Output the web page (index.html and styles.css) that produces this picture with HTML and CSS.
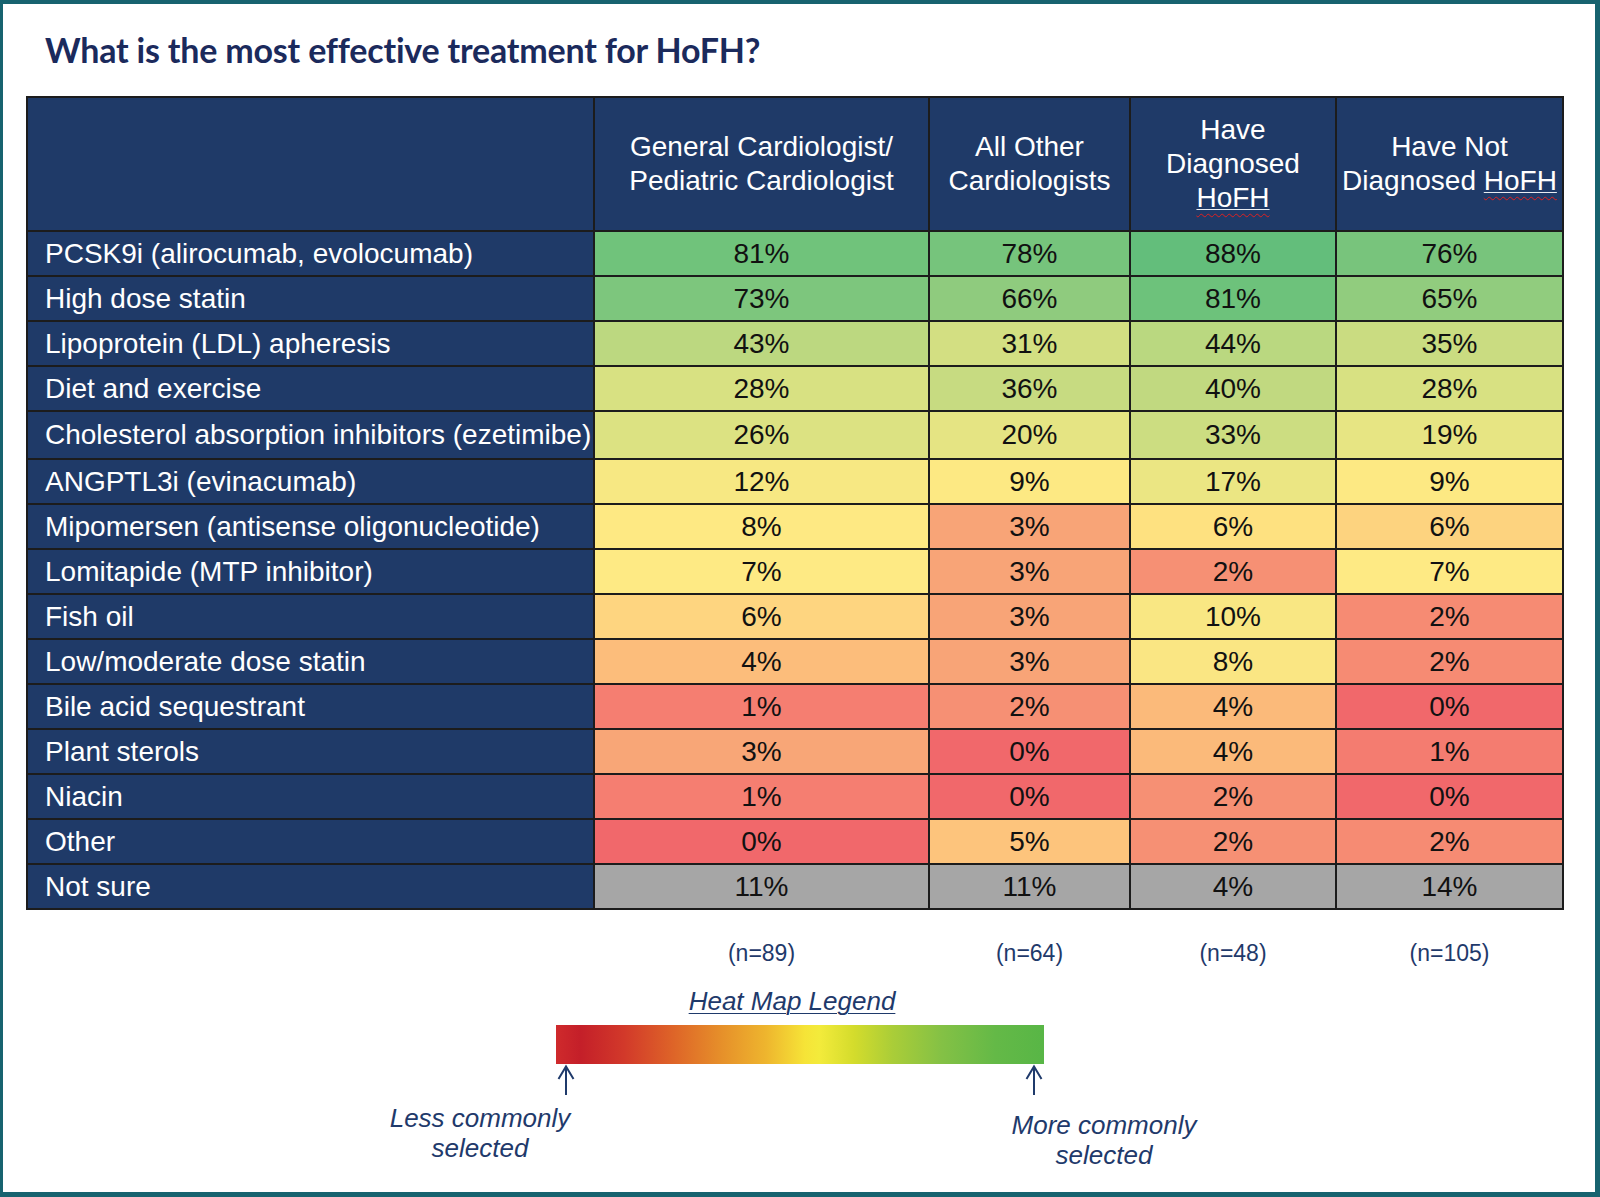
FILE: index.html
```html
<!DOCTYPE html>
<html lang="en">
<head>
<meta charset="utf-8">
<title>What is the most effective treatment for HoFH?</title>
<link rel="stylesheet" href="styles.css">
</head>
<body>
<div class="frame">
  <h1 class="title">What is the most effective treatment for HoFH?</h1>

  <div class="heat">
    <div class="hcell hcorner"></div>
    <div class="hcell"><div>General Cardiologist/<br>Pediatric Cardiologist</div></div>
    <div class="hcell"><div>All Other<br>Cardiologists</div></div>
    <div class="hcell"><div>Have<br>Diagnosed<br><span class="spell"><span class="ul">HoFH</span></span></div></div>
    <div class="hcell"><div>Have Not<br>Diagnosed <span class="spell"><span class="ul">HoFH</span></span></div></div>

    <div class="lbl">PCSK9i (alirocumab, evolocumab)</div>
    <div class="val" style="background:#70c37b">81%</div>
    <div class="val" style="background:#76c47c">78%</div>
    <div class="val" style="background:#63be7b">88%</div>
    <div class="val" style="background:#78c47c">76%</div>

    <div class="lbl">High dose statin</div>
    <div class="val" style="background:#7dc67d">73%</div>
    <div class="val" style="background:#8fcb7e">66%</div>
    <div class="val" style="background:#6dc27b">81%</div>
    <div class="val" style="background:#91cc7e">65%</div>

    <div class="lbl">Lipoprotein (LDL) apheresis</div>
    <div class="val" style="background:#bcd880">43%</div>
    <div class="val" style="background:#d3df82">31%</div>
    <div class="val" style="background:#bad880">44%</div>
    <div class="val" style="background:#cadc81">35%</div>

    <div class="lbl">Diet and exercise</div>
    <div class="val" style="background:#d8e182">28%</div>
    <div class="val" style="background:#c7db81">36%</div>
    <div class="val" style="background:#c1d980">40%</div>
    <div class="val" style="background:#d8e182">28%</div>

    <div class="lbl">Cholesterol absorption inhibitors (ezetimibe)</div>
    <div class="val" style="background:#dce282">26%</div>
    <div class="val" style="background:#e5e483">20%</div>
    <div class="val" style="background:#ccdd81">33%</div>
    <div class="val" style="background:#e7e583">19%</div>

    <div class="lbl">ANGPTL3i (evinacumab)</div>
    <div class="val" style="background:#f7e883">12%</div>
    <div class="val" style="background:#fde983">9%</div>
    <div class="val" style="background:#ebe683">17%</div>
    <div class="val" style="background:#fde983">9%</div>

    <div class="lbl">Mipomersen (antisense oligonucleotide)</div>
    <div class="val" style="background:#fee983">8%</div>
    <div class="val" style="background:#f8a477">3%</div>
    <div class="val" style="background:#fee180">6%</div>
    <div class="val" style="background:#fdd37f">6%</div>

    <div class="lbl">Lomitapide (MTP inhibitor)</div>
    <div class="val" style="background:#feea84">7%</div>
    <div class="val" style="background:#f8a477">3%</div>
    <div class="val" style="background:#f69074">2%</div>
    <div class="val" style="background:#feea84">7%</div>

    <div class="lbl">Fish oil</div>
    <div class="val" style="background:#fed580">6%</div>
    <div class="val" style="background:#f8a477">3%</div>
    <div class="val" style="background:#f9e783">10%</div>
    <div class="val" style="background:#f68b73">2%</div>

    <div class="lbl">Low/moderate dose statin</div>
    <div class="val" style="background:#fcbd7b">4%</div>
    <div class="val" style="background:#f8a477">3%</div>
    <div class="val" style="background:#fae683">8%</div>
    <div class="val" style="background:#f68b73">2%</div>

    <div class="lbl">Bile acid sequestrant</div>
    <div class="val" style="background:#f57e71">1%</div>
    <div class="val" style="background:#f69074">2%</div>
    <div class="val" style="background:#fbba7a">4%</div>
    <div class="val" style="background:#f1686b">0%</div>

    <div class="lbl">Plant sterols</div>
    <div class="val" style="background:#f8a677">3%</div>
    <div class="val" style="background:#f1686b">0%</div>
    <div class="val" style="background:#fbba7a">4%</div>
    <div class="val" style="background:#f47c70">1%</div>

    <div class="lbl">Niacin</div>
    <div class="val" style="background:#f57e71">1%</div>
    <div class="val" style="background:#f1686b">0%</div>
    <div class="val" style="background:#f69074">2%</div>
    <div class="val" style="background:#f1686b">0%</div>

    <div class="lbl">Other</div>
    <div class="val" style="background:#f1686b">0%</div>
    <div class="val" style="background:#fdc47c">5%</div>
    <div class="val" style="background:#f69074">2%</div>
    <div class="val" style="background:#f68b73">2%</div>

    <div class="lbl">Not sure</div>
    <div class="val gray">11%</div>
    <div class="val gray">11%</div>
    <div class="val gray">4%</div>
    <div class="val gray">14%</div>
  </div>

  <div class="counts">
    <div></div>
    <div>(n=89)</div>
    <div>(n=64)</div>
    <div>(n=48)</div>
    <div>(n=105)</div>
  </div>

  <div class="legend">
    <div class="legend-title">Heat Map Legend</div>
    <div class="legend-bar"></div>
    <div class="legend-arrows">
      <svg class="arrow" width="20" height="32" viewBox="0 0 20 32"><path d="M10 31 V3 M2.5 15 L10 2.5 L17.5 15" fill="none" stroke="#1f3a6b" stroke-width="2"/></svg>
      <svg class="arrow" width="20" height="32" viewBox="0 0 20 32"><path d="M10 31 V3 M2.5 15 L10 2.5 L17.5 15" fill="none" stroke="#1f3a6b" stroke-width="2"/></svg>
    </div>
    <div class="legend-labels">
      <div class="lab-less">Less commonly<br>selected</div>
      <div class="lab-more">More commonly<br>selected</div>
    </div>
  </div>
</div>
</body>
</html>
```

FILE: styles.css
```css
* { box-sizing: border-box; }

html, body {
  margin: 0;
  padding: 0;
  background: #ffffff;
}

.frame {
  width: 1600px;
  height: 1197px;
  border-style: solid;
  border-color: #17636f;
  border-width: 4px 5px 5px 3px;
  padding-top: 26px;
  background: #ffffff;
  overflow: hidden;
}

.title {
  margin: 0 0 26px 42px;
  font-family: Lato, "Open Sans", sans-serif;
  font-weight: 700;
  font-size: 34px;
  line-height: 40px;
  letter-spacing: -0.2px;
  color: #1b2a5c;
}

.heat {
  margin-left: 23px;
  width: 1538px;
  display: grid;
  grid-template-columns: 565px 333px 199px 204px 225px;
  grid-template-rows: 132px repeat(4, 43px) 46px repeat(10, 43px);
  gap: 2px;
  padding: 2px;
  background: #1c1c1c;
  font-family: "Liberation Sans", Arial, sans-serif;
  font-size: 28px;
}

.hcell {
  background: #1f3a68;
  color: #ffffff;
  line-height: 34px;
  text-align: center;
  display: flex;
  align-items: center;
  justify-content: center;
  white-space: nowrap;
}

.spell {
  text-decoration: underline wavy #e02020;
  text-decoration-thickness: 1px;
  text-underline-offset: 6px;
}

.ul {
  text-decoration: underline solid #e8ecf2;
  text-decoration-thickness: 1px;
  text-underline-offset: 2px;
}

.lbl {
  background: #1f3a68;
  color: #ffffff;
  padding-left: 17px;
  display: flex;
  align-items: center;
  white-space: nowrap;
}

.val {
  color: #111111;
  display: flex;
  align-items: center;
  justify-content: center;
}

.val.gray { background: #a6a6a6; }

.counts {
  margin: 29px 0 0 23px;
  width: 1538px;
  padding: 0 2px;
  display: grid;
  grid-template-columns: 565px 333px 199px 204px 225px;
  column-gap: 2px;
  font-family: "Liberation Sans", Arial, sans-serif;
  font-size: 23px;
  line-height: 28px;
  color: #1f3a6b;
  text-align: center;
}

.legend {
  margin: 19px 0 0 377px;
  width: 824px;
  font-family: "Liberation Sans", Arial, sans-serif;
  font-style: italic;
  font-size: 26px;
  line-height: 30px;
  color: #1f3a6b;
}

.legend-title {
  text-align: center;
  text-decoration: underline;
  text-decoration-thickness: 1px;
  text-underline-offset: 3px;
}

.legend-bar {
  margin: 9px 0 0 176px;
  width: 488px;
  height: 39px;
  background: linear-gradient(to right,
    #cf2a2c 0%, #c41f29 5%, #d2392a 14%, #de6428 24%, #e6902a 34%,
    #eeb52e 43%, #f6e437 51%, #f3eb3b 54%, #d4dc2c 61%, #aacd38 69%,
    #84c145 79%, #64b947 90%, #58b646 100%);
}

.legend-arrows {
  margin-left: 176px;
  width: 488px;
  height: 32px;
  display: flex;
  justify-content: space-between;
  align-items: flex-end;
}

.arrow { display: block; }

.legend-labels {
  margin-top: 7px;
  display: flex;
  justify-content: space-between;
  align-items: flex-start;
}

.lab-less,
.lab-more {
  width: 200px;
  text-align: center;
  white-space: nowrap;
}

.lab-more { margin-top: 7px; }
```
